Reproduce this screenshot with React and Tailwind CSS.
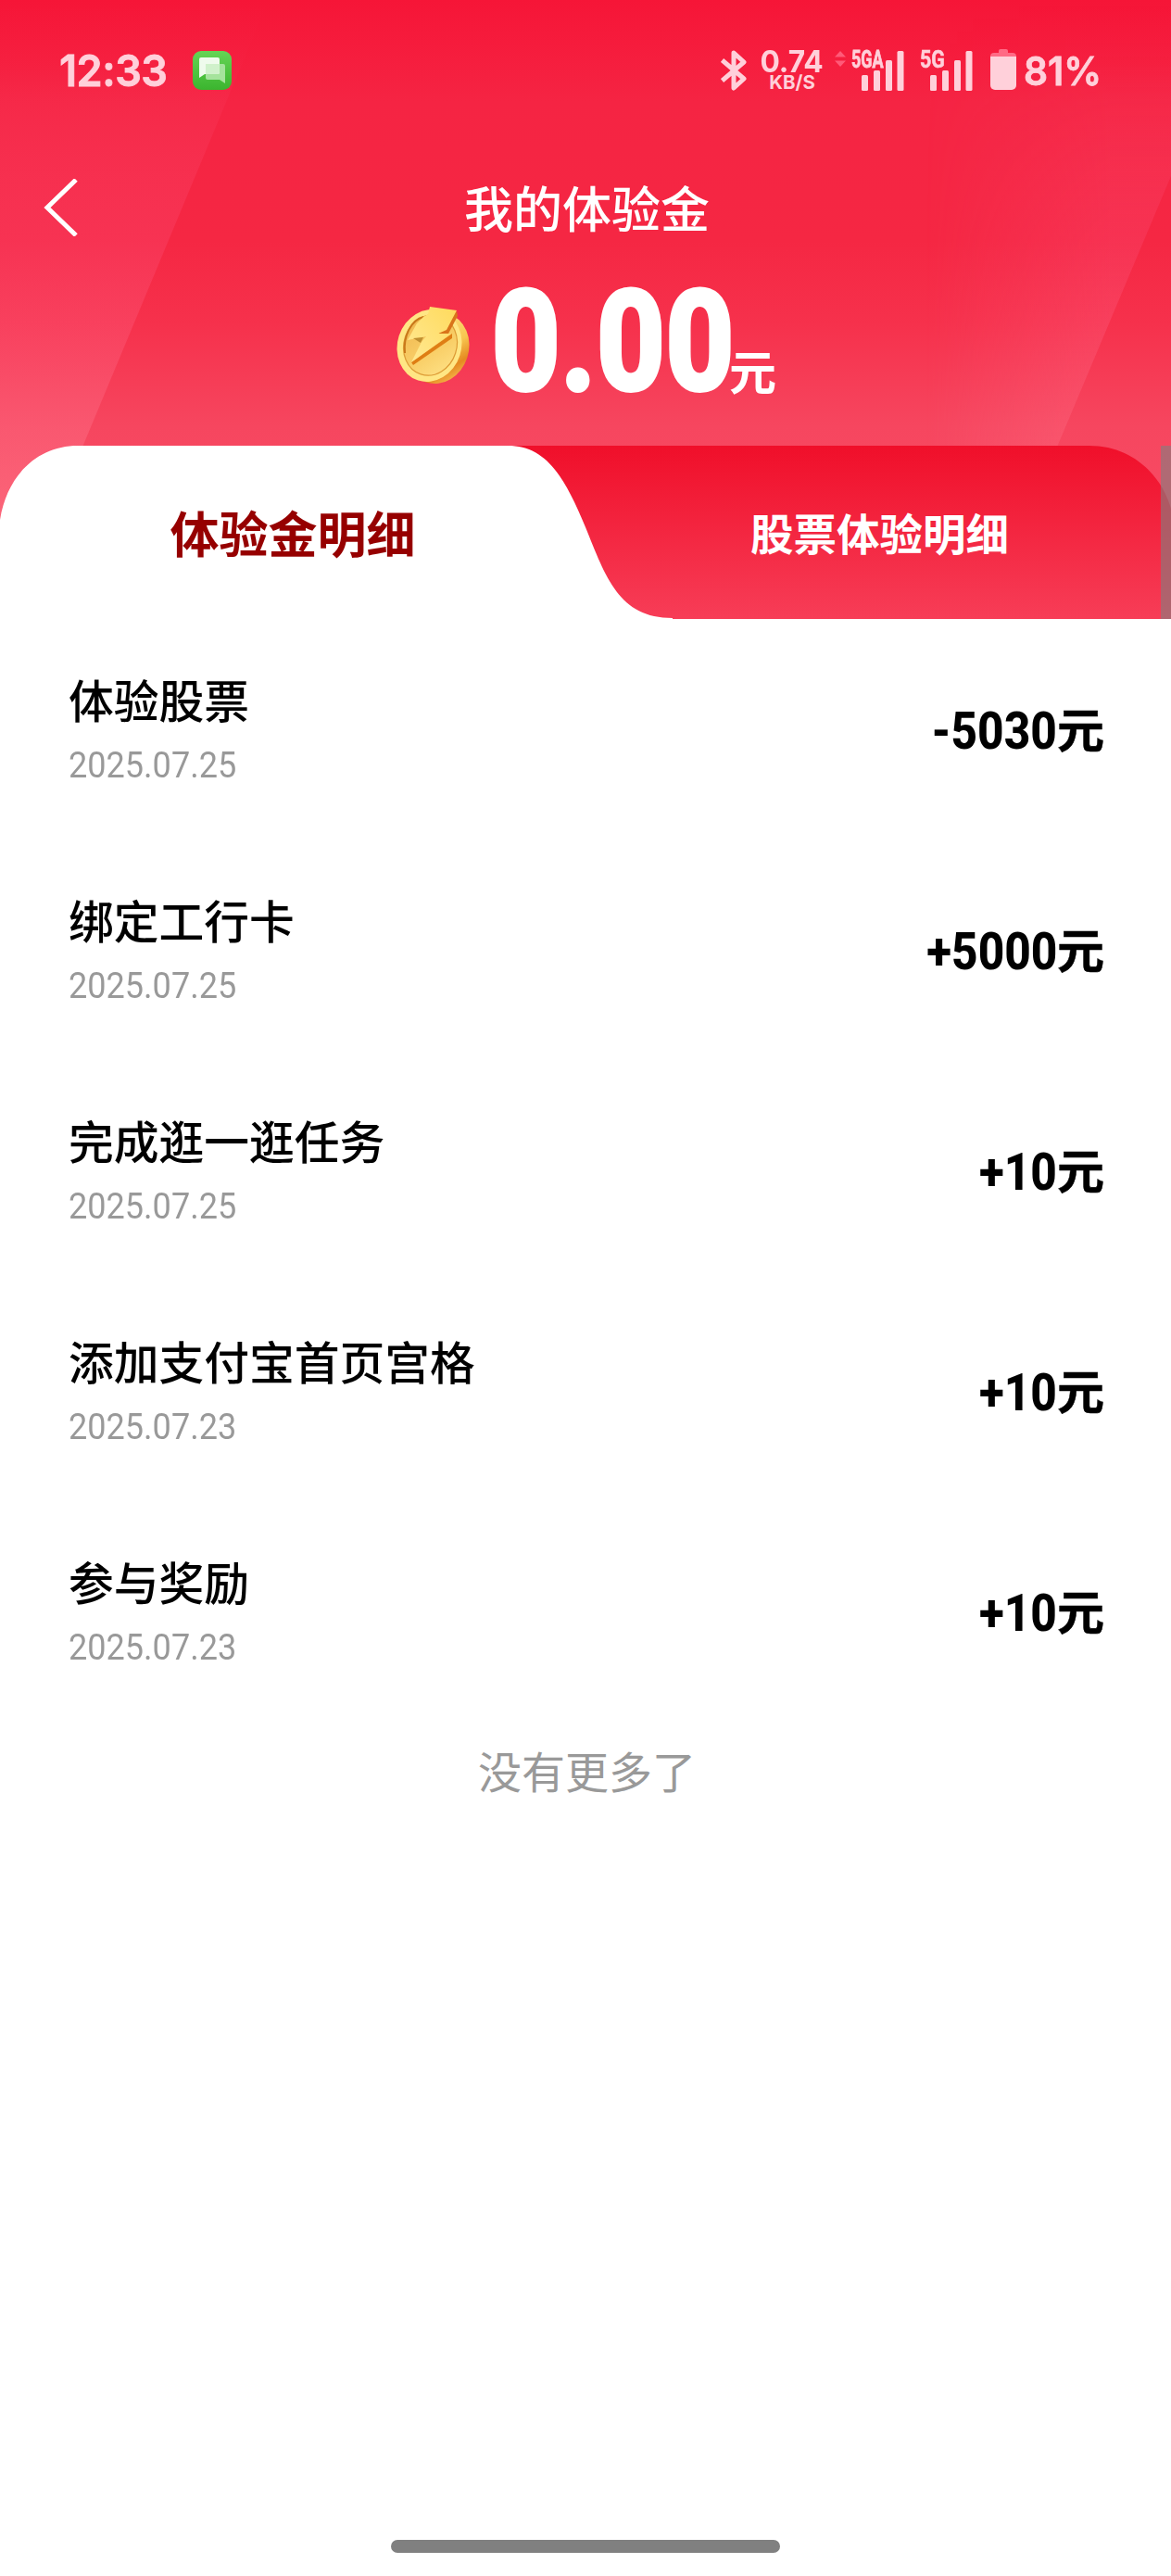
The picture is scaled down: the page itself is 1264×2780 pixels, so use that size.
const rows = [
  ["体验股票", "2025.07.25", "-5030"],
  ["绑定工行卡", "2025.07.25", "+5000"],
  ["完成逛一逛任务", "2025.07.25", "+10"],
  ["添加支付宝首页宫格", "2025.07.23", "+10"],
  ["参与奖励", "2025.07.23", "+10"],
];

const Signal = () => (
  <svg className="block h-[44px] w-[46px]" viewBox="0 0 46 44" fill="#ffd0da">
    <rect x="0" y="26" width="7" height="17" rx="1.5" />
    <rect x="13" y="21" width="7" height="22" rx="1.5" />
    <rect x="26" y="10" width="7" height="33" rx="1.5" />
    <rect x="38.500" y="0" width="7" height="43" rx="1.5" />
  </svg>
);

function StatusBar() {
  return (
    <div className="relative flex h-[152px] items-start text-[#ffd0da] font-['Inter'] font-semibold">
      <div className="ml-[64px] mt-[52px] w-[115px] whitespace-nowrap text-[47px] leading-[48px]">
        <span className="inline-block origin-left scale-x-[0.96] tracking-[-0.5px] [-webkit-text-stroke:0.8px_#ffd0da]">12:33</span>
      </div>
      <svg className="ml-[29px] mt-[55px] h-[42px] w-[42px]" viewBox="0 0 42 42">
        <defs>
          <linearGradient id="msg" x1="0" y1="0" x2="0" y2="1">
            <stop offset="0" stopColor="#66d455" />
            <stop offset="1" stopColor="#3bb52f" />
          </linearGradient>
        </defs>
        <rect width="42" height="42" rx="9" fill="url(#msg)" />
        <path d="M15 14h18a2 2 0 0 1 2 2v19l-6-4H16a2 2 0 0 1-2-2V15z" fill="#a5e39c" />
        <path d="M9 7h18a2 2 0 0 1 2 2v14a2 2 0 0 1-2 2H13l-6 4V9a2 2 0 0 1 2-2z" fill="#effbed" />
        <path d="M14 14h15v9a2 2 0 0 1-2 2H14z" fill="#d0f1cb" />
      </svg>
      <svg className="ml-[528px] mt-[54px] h-[44px] w-[28px]" viewBox="0 0 28 44" fill="none" stroke="#ffd0da" strokeWidth="5" strokeLinejoin="round">
        <path d="M1.500 11L25 31L14 41V3L25 13L1.500 33" />
      </svg>
      <div className="ml-[14px] mt-[52px] flex w-[70px] flex-col items-center whitespace-nowrap">
        <span className="scale-x-[0.96] text-[33px] font-bold leading-[28px]">0.74</span>
        <span className="text-[20.500px] font-bold leading-[18px]">KB/S</span>
      </div>
      <svg className="ml-[11px] mt-[55px] h-[17px] w-[12px]" viewBox="0 0 12 17" fill="#ff5a78">
        <path d="M6 0l6 6.500H0zM6 17l6-6.500H0z" />
      </svg>
      <div className="relative ml-[17px] mt-[55px]">
        <Signal />
        <span className="absolute -left-[11px] -top-[3px] origin-left scale-x-[0.69] font-['Roboto'] text-[26px] font-bold leading-[24px] [-webkit-text-stroke:0.8px_#ffd0da]">5GA</span>
      </div>
      <div className="relative ml-[28px] mt-[55px]">
        <Signal />
        <span className="absolute -left-[11px] -top-[3px] origin-left scale-x-[0.82] font-['Roboto'] text-[26px] font-bold leading-[24px] [-webkit-text-stroke:0.6px_#ffd0da]">5G</span>
      </div>
      <svg className="ml-[19px] mt-[53px] h-[44px] w-[28px]" viewBox="0 0 28 44">
        <path d="M9 2a2 2 0 0 1 2-2h6a2 2 0 0 1 2 2v2h5a4 4 0 0 1 4 4H0a4 4 0 0 1 4-4h5z" fill="#ff6a85" />
        <path d="M0 8h28v31a5 5 0 0 1-5 5H5a5 5 0 0 1-5-5z" fill="#ffd0da" />
      </svg>
      <span className="ml-[8px] mt-[52px] origin-left scale-x-[0.945] text-[43px] font-semibold leading-[48px] [-webkit-text-stroke:0.8px_#ffd0da]">81%</span>
    </div>
  );
}

const Coin = () => (
  <svg className="block h-[88px] w-[82px]" viewBox="0 0 82 88">
    <defs>
      <linearGradient id="edge" x1="0" y1="0" x2="1" y2="1">
        <stop offset="0" stopColor="#fff0a0" />
        <stop offset=".55" stopColor="#f8c650" />
        <stop offset=".75" stopColor="#e58a20" />
        <stop offset=".88" stopColor="#f5b64c" />
        <stop offset="1" stopColor="#e89a50" />
      </linearGradient>
      <linearGradient id="face" x1="0" y1="0" x2="1" y2="1">
        <stop offset="0" stopColor="#eeb24a" />
        <stop offset=".6" stopColor="#f9cf68" />
        <stop offset="1" stopColor="#ffe58c" />
      </linearGradient>
      <linearGradient id="bolt" x1="1" y1="0" x2="0" y2="1">
        <stop offset="0" stopColor="#ffda5c" />
        <stop offset="1" stopColor="#ffe994" />
      </linearGradient>
    </defs>
    <ellipse cx="46" cy="46.500" rx="34" ry="39" transform="rotate(18 46 46.500)" fill="url(#edge)" />
    <ellipse cx="37.500" cy="44" rx="34.500" ry="39.500" transform="rotate(18 37.500 44)" fill="#ffe684" />
    <ellipse cx="38.500" cy="43.500" rx="28.500" ry="33" transform="rotate(18 38.500 43.500)" fill="url(#face)" stroke="#dd9b35" strokeWidth="1.200" />
    <path d="M11 52C9 34 18 16 31 13" fill="none" stroke="#c9781a" strokeWidth="2" />
    <path d="M67 7L68 12L58 31L47 32L52 24z" fill="#d9741a" />
    <path d="M62 31L62 36L20 65L18 62z" fill="#df7e14" />
    <path d="M38 2L67 6L56 27L47 31L61 31L18 62L29 40L34 34L14 38L24 20L31 13L36 10z" fill="url(#bolt)" />
    <path d="M20 36L31 35L28 41z" fill="#bf8f30" />
  </svg>
);

function Tabs() {
  return (
    <div className="relative h-[187px] overflow-hidden">
      <svg className="absolute inset-0 h-[187px] w-[1264px]" viewBox="0 0 1264 187">
        <defs>
          <linearGradient id="tab" x1="0" y1="0" x2="0" y2="1">
            <stop offset="0" stopColor="#f00f2a" />
            <stop offset="1" stopColor="#f73d57" />
          </linearGradient>
        </defs>
        <path d="M540 0H1176C1222 0 1254 32 1264 68V187H540z" fill="url(#tab)" />
        <path d="M0 187V80C8 30 42 0 84 0H548C588 0 608 30 632 88C654 142 668 186 726 186V187z" fill="#fff" />
        <rect x="1253" y="0" width="11" height="187" fill="#808080" fillOpacity=".6" />
      </svg>
      <div className="relative flex h-[187px] items-center pb-[1px] font-['Noto_Sans_CJK_SC',sans-serif] font-bold">
        <span className="w-[632px] text-center text-[53px] leading-[80px] text-[#960000]">体验金明细</span>
        <span className="w-[632px] pl-[3px] text-center text-[46.500px] leading-[80px] text-white">股票体验明细</span>
      </div>
    </div>
  );
}

export default function App() {
  return (
    <div className="relative flex h-[2780px] w-[1264px] flex-col overflow-hidden bg-white font-['Noto_Sans_CJK_SC',sans-serif]">
      <div className="relative h-[668px] bg-[linear-gradient(180deg,#f61537_0px,#f52443_110px,#f52743_260px,#f6314c_350px,#f6465f_460px,#f84c64_560px)]">
        <svg className="absolute inset-0 h-[668px] w-[1264px]" viewBox="0 0 1264 668">
          <defs>
            <linearGradient id="beam" x1="0" y1="0" x2="0" y2="1">
              <stop offset="0" stopColor="#ff6088" stopOpacity="0" />
              <stop offset=".12" stopColor="#ff6088" stopOpacity=".02" />
              <stop offset=".45" stopColor="#fb4a72" stopOpacity=".33" />
              <stop offset="1" stopColor="#ff8290" stopOpacity=".5" />
            </linearGradient>
            <linearGradient id="fade" x1="0" y1="0" x2="1" y2="0">
              <stop offset="0" stopColor="#fff" stopOpacity="0" />
              <stop offset="1" stopColor="#fff" />
            </linearGradient>
            <mask id="soft" maskUnits="userSpaceOnUse" x="1000" y="0" width="264" height="668">
              <rect x="1000" y="0" width="200" height="668" fill="url(#fade)" />
              <rect x="1200" y="0" width="64" height="668" fill="#fff" />
            </mask>
          </defs>
          <path d="M0 0H290L90 480L50 576H0z" fill="url(#beam)" />
          <path d="M1000 0H1264V190L1142 480L1100 576H1000z" fill="url(#beam)" mask="url(#soft)" />
        </svg>
        <StatusBar />
        <header className="relative flex h-[146px] items-center">
          <svg className="-mt-[2px] ml-[46px] h-[62px] w-[38px]" viewBox="0 0 38 62" fill="none" stroke="#fff" strokeWidth="5">
            <path d="M36 1L5 31L36 61" />
          </svg>
          <h1 className="-mt-[5px] ml-[417px] text-[53px] font-medium leading-[80px] text-white">我的体验金</h1>
        </header>
        <div className="relative flex h-[183px] items-start text-white">
          <div className="ml-[426px] mt-[31px]"><Coin /></div>
          <div className="ml-[22px] mt-[-8px] w-[257px] whitespace-nowrap font-['Roboto'] text-[154px] font-black leading-[160px] tracking-[-1px]">
            <span className="inline-block origin-left scale-x-[0.845] [-webkit-text-stroke:2px_white]">0.00</span>
          </div>
          <span className="mt-[63px] text-[51px] font-bold leading-[76px]">元</span>
        </div>
        <Tabs />
      </div>

      <main className="bg-white">
        {rows.map(([title, date, amount]) => (
          <div key={title} className="flex h-[238px] items-start justify-between pl-[74px] pr-[72px]">
            <div className="flex flex-col pt-[50px]">
              <span className="text-[48.750px] font-medium leading-[72px] text-black">{title}</span>
              <span className="mt-[12px] origin-left self-start scale-x-[0.925] font-['Roboto'] text-[39px] leading-[48px] text-[#999]">{date}</span>
            </div>
            <div className="flex items-start pt-[83px] font-bold text-black">
              <span className="origin-right scale-x-[0.885] font-['Roboto'] text-[56px] font-extrabold leading-[76px]">{amount}</span>
              <span className="-mt-[4px] text-[51px] leading-[76px] [-webkit-text-stroke:0.500px_black]">元</span>
            </div>
          </div>
        ))}
        <p className="mt-[17px] pl-[3px] text-center text-[47px] leading-[70px] text-[#999]">没有更多了</p>
      </main>
      <div className="mx-auto mb-[25px] mt-auto h-[14px] w-[420px] rounded-full bg-[#808080]" />
    </div>
  );
}
